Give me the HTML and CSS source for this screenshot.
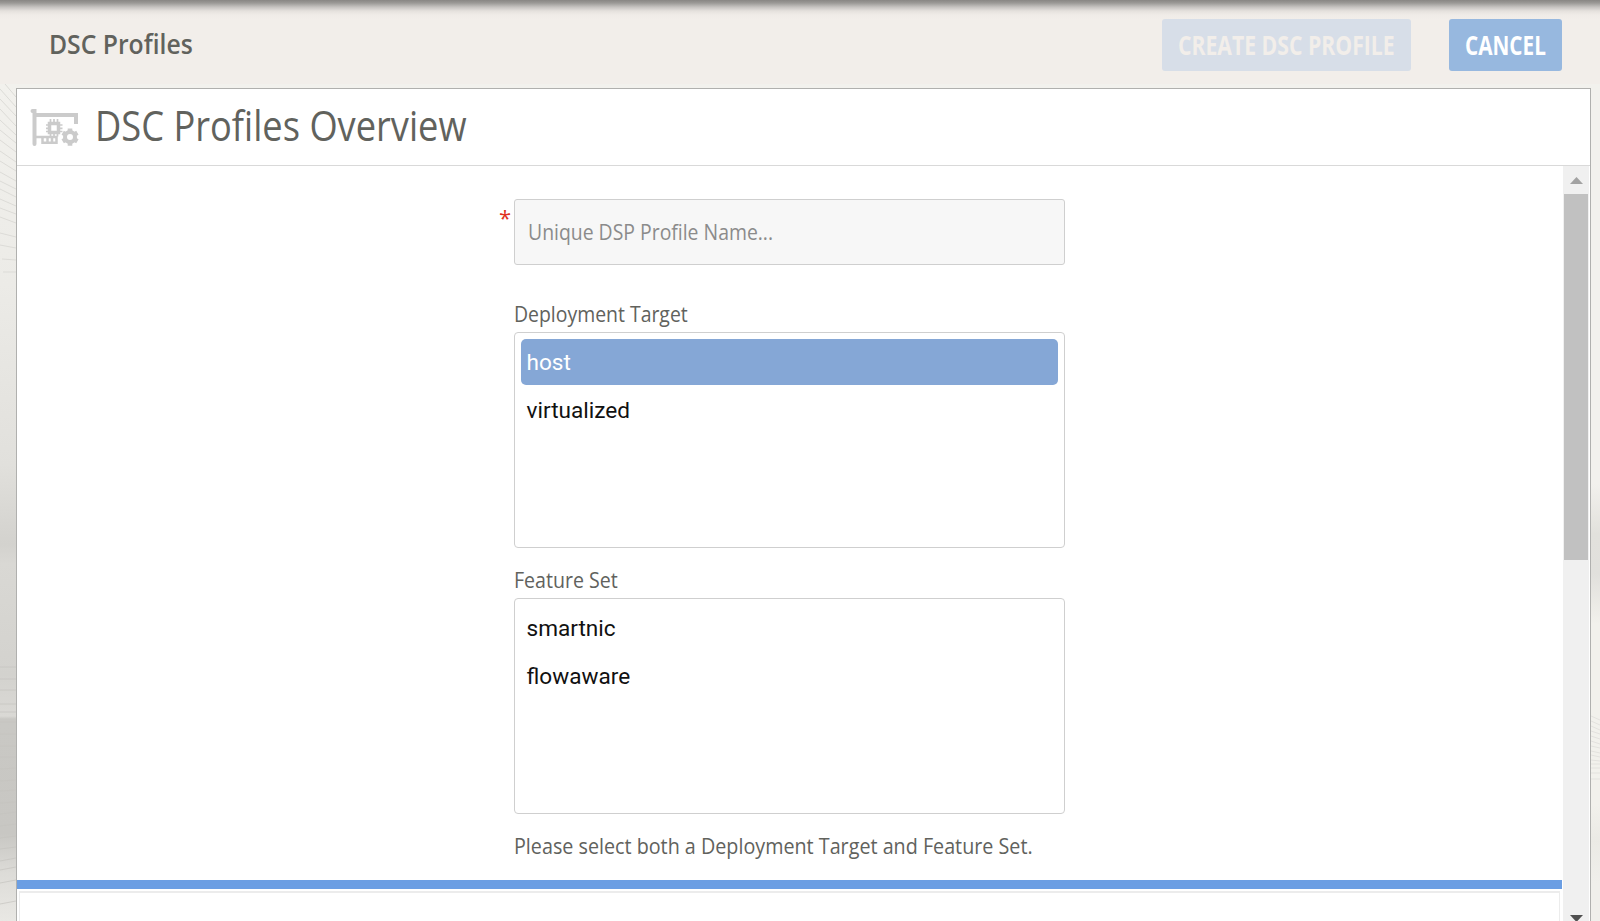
FILE: index.html
```html
<!DOCTYPE html>
<html lang="en">
<head>
<meta charset="utf-8">
<title>DSC Profiles</title>
<link rel="stylesheet" href="styles.css">
</head>
<body>
<div class="app">
  <header class="toolbar">
    <div class="crumb"><span class="fit fit-crumb">DSC Profiles</span></div>
    <div class="actions">
      <button class="btn btn-create" disabled><span class="fit fit-create">CREATE DSC PROFILE</span></button>
      <button class="btn btn-cancel"><span class="fit fit-cancel">CANCEL</span></button>
    </div>
  </header>
  <main class="stage">
    <svg class="waves" width="16" height="837" viewBox="0 84 16 837" fill="none" stroke="#dcdbd7">
      <path d="M5 84l11 13M0 89l16 18M0 99l16 17M0 109l16 17M0 120l16 15M0 130l16 13M0 140l16 12M0 151l16 11M0 161l16 10M0 172l16 9M0 181l16 8M0 189l16 8M0 199l16 7M0 208l16 6M0 217l16 6M0 233l16 4M0 245l16 3M2 259l14 1M3 272h13"/>
      <path stroke="#c4c3bf" stroke-opacity=".7" d="M0 667h16M0 679h16M0 690h16M0 704h16M0 712h16M0 722h16M0 734h16M0 746h16M0 757h16M0 769l16-1M0 781l16-1M0 791l16-1M0 803l16-1M0 814l16-2M0 826l16-2M0 838l16-2M0 849l16-2M0 861l16-3M0 870l16-3M0 883l16-3M0 904l16-3"/>
    </svg>
    <section class="panel">
      <div class="panel-head">
        <svg class="card-icon" width="50" height="40" viewBox="0 0 50 40" fill="none" stroke="#cbcbcb">
          <path stroke-width="4" stroke-linecap="round" d="M2.500 3H4.500V36"/>
          <path stroke-width="4" d="M4 7H46V16"/>
          <path stroke-width="2.500" d="M5 29H12.500V34.800H26.500V29H12.500M17.500 29v6M22 29v6"/>
          <rect x="19.500" y="15.500" width="9" height="9" stroke-width="3.500"/>
          <path stroke-width="1.700" d="M20.500 11v4M24 11v4M27.500 11v4M20.500 25v3.500M24 25v3.500M27.500 25v3.500M16 17h3M16 20.300h3M16 23.500h3M29 17h3.500M29 20.300h3.500M29 23.500h3.500"/>
          <circle cx="40" cy="29" r="5" stroke-width="4"/>
          <path stroke-width="4.600" d="M40 20.500v3M40 34.500v3.200M32.700 24.800l2.600 1.500M44.700 31.700l2.700 1.600M32.700 33.300l2.600-1.600M44.700 26.300l2.700-1.500"/>
        </svg>
        <h1><span class="fit fit-title">DSC Profiles Overview</span></h1>
      </div>
      <div class="panel-body">
        <div class="content">
          <form class="form">
            <div class="name-field">
              <span class="required">*</span>
              <div class="name-input"><span class="fit fit-input">Unique DSP Profile Name...</span></div>
            </div>
            <div class="label label-first"><span class="fit fit-target">Deployment Target</span></div>
            <ul class="listbox">
              <li class="selected">host</li>
              <li>virtualized</li>
            </ul>
            <div class="label"><span class="fit fit-feature">Feature Set</span></div>
            <ul class="listbox">
              <li>smartnic</li>
              <li>flowaware</li>
            </ul>
            <div class="label"><span class="fit fit-hint">Please select both a Deployment Target and Feature Set.</span></div>
          </form>
          <div class="divider"></div>
          <div class="table-card"></div>
        </div>
        <div class="scrollbar">
          <svg width="26" height="28" viewBox="0 0 26 28"><path fill="#a2a2a2" d="M7 18L13.500 11L20 18z"/></svg>
          <div class="thumb"></div>
          <svg class="down" width="26" height="6" viewBox="0 0 26 6"><path fill="#505050" d="M7 0H20L13.500 7z"/></svg>
        </div>
      </div>
    </section>
    <svg class="waves" width="9" height="837" viewBox="0 84 9 837" fill="none" stroke="#e3e2de">
      <path d="M0 716l9 4M0 721l9 4M0 726l9 4M0 731l9 3M0 736l9 3M0 741l9 3M0 746l9 2M0 751l9 2M0 755l9 2M0 760l9 1M0 764h9M0 768h9M0 773h9M0 779h9"/>
    </svg>
  </main>
</div>
</body>
</html>
```
FILE: styles.css
```css
* { box-sizing: border-box; }
body {
  margin: 0;
  font-family: "Open Sans", "Noto Sans", sans-serif;
  color: #61625d;
}
.app {
  display: flex;
  flex-direction: column;
  height: 921px;
  overflow: hidden;
}
.toolbar {
  flex: none;
  display: flex;
  justify-content: space-between;
  height: 84px;
  padding: 19px 38px 0 49px;
  background: linear-gradient(#888683 0, #9b9996 3px, #c5c2bf 7px, #e5e1dd 11px, #f0ece8 15px, #f2eeea 20px);
}

/* Condensed lettering */
.fit {
  display: inline-block;
  white-space: nowrap;
  transform-origin: 0 50%;
}
.fit-crumb { transform: scaleX(.915); }
.fit-create { transform: scaleX(.815); }
.fit-cancel { transform: scaleX(.797); }
.fit-title { transform: scaleX(.863); }
.fit-input { transform: scaleX(.862); }
.fit-target { transform: scaleX(.863); }
.fit-feature { transform: scaleX(.871); }
.fit-hint { transform: scaleX(.877); }

.crumb {
  font-size: 27px;
  font-weight: 600;
  line-height: 50px;
}
.actions { display: flex; gap: 38px; }
.btn {
  height: 52px;
  padding: 0 0 1px 16px;
  border: 0;
  border-radius: 3px;
  font: 700 26px/50px "Open Sans", "Noto Sans", sans-serif;
  text-align: left;
}
.btn-create { width: 249px; background: #d7dee8; color: #f2eeea; }
.btn-cancel { width: 113px; background: #97b8df; color: #fff; }
.stage {
  flex: 1;
  display: flex;
  padding-top: 4px;
  background: linear-gradient(#f2f1ed 0, #ecebe7 200px, #e1e0dc 380px, #d3d2ce 460px, #d9d8d4 480px, #d3d2ce 590px, #dad9d5 632px, #c9c8c4 635px, #c8c7c3 750px, #dddcd8 790px, #e9e8e4 837px) 0 0 / 16px 100% no-repeat,
    linear-gradient(#f2f1ed 0, #f2f1ed 400px, #e2e1dc 450px, #e1e0dc 490px, #f2f1ec 540px, #f2f1ec 720px, #ebeae5 755px, #f0efeb 800px);
}
.waves { flex: none; margin-top: -4px; }
.panel {
  flex: none;
  display: flex;
  flex-direction: column;
  width: 1575px;
  height: 833px;
  border: 1px solid #b0b0ae;
  border-bottom: 0;
  background: #fff;
}
.panel-head {
  flex: none;
  display: flex;
  height: 77px;
  padding-left: 13px;
  border-bottom: 1px solid #d9d9d9;
}
.card-icon { margin-top: 19px; }
h1 {
  margin: 0 0 0 15px;
  font-size: 42px;
  font-weight: 400;
  line-height: 72px;
}
.panel-body { flex: 1; display: flex; min-height: 0; }
.content { width: 1545px; margin-right: 1px; }
.form {
  width: 551px;
  height: 714px;
  margin-left: 497px;
  padding-top: 33px;
}
.name-field { position: relative; height: 66px; }
.required {
  position: absolute;
  left: -15px;
  top: 3px;
  color: #e0301e;
  font-size: 22px;
  line-height: 30px;
}
.name-input {
  height: 66px;
  padding-left: 13px;
  border: 1px solid #cfcfcf;
  border-radius: 3px;
  background: #f7f7f7;
  color: #8b8b8b;
  font-size: 22.500px;
  line-height: 64px;
}
.label { height: 50px; padding-top: 15px; font-size: 22.500px; line-height: 34px; }
.label-first { height: 67px; padding-top: 32px; }
.listbox {
  height: 216px;
  margin: 0;
  padding: 6px;
  border: 1px solid #cfcfcf;
  border-radius: 4px;
  list-style: none;
  color: #111;
  font: 22.600px/48px Roboto, sans-serif;
}
.listbox li { height: 46px; margin-bottom: 2px; padding-left: 5.500px; border-radius: 5px; }
.listbox .selected { background: #85a7d6; color: #fff; }
.divider { height: 9px; background: #6b9ee3; }
.table-card { height: 40px; margin: 2px 2px 0; border: 1px solid #ececec; border-width: 2px 1px 0; }
.scrollbar {
  display: flex;
  flex-direction: column;
  width: 26px;
  background: #f0f0f0;
}
.thumb { height: 366px; margin: 0 1px; background: #c1c1c1; }
.down { margin-top: auto; }
```
